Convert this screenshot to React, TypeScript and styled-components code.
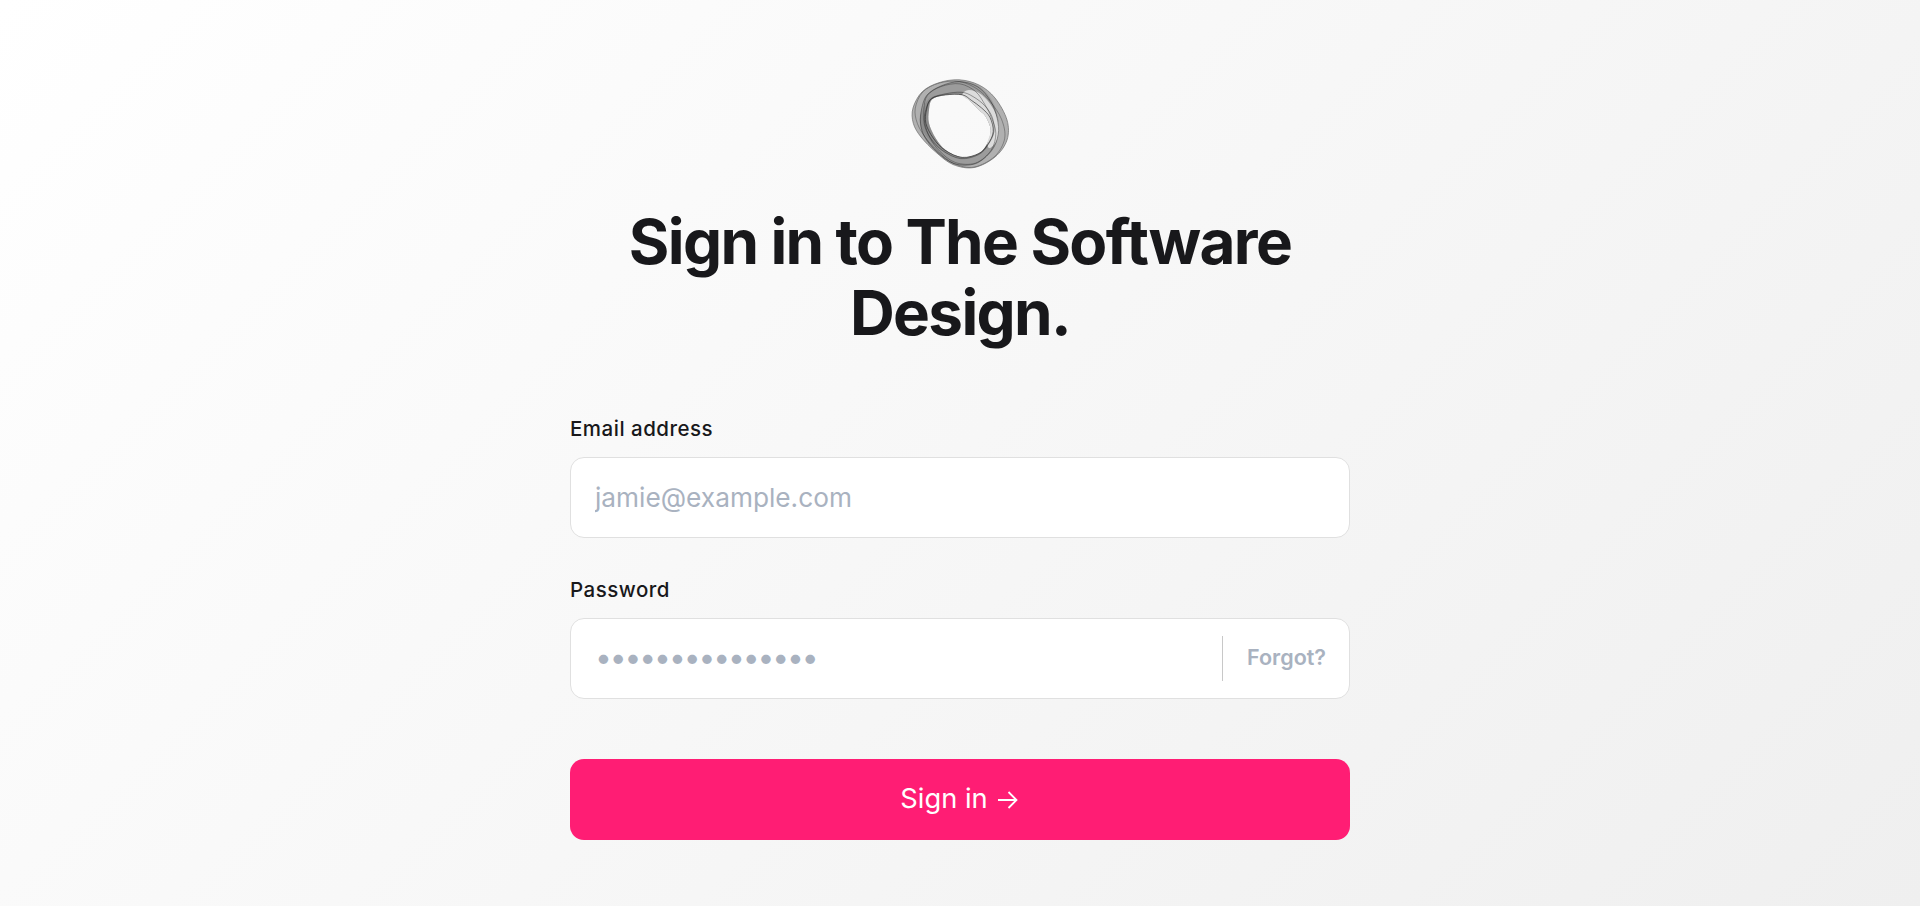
import styled, { createGlobalStyle } from 'styled-components';

const GlobalStyle = createGlobalStyle`
    * {
        box-sizing: border-box;
    }

    html, body {
        margin: 0;
        padding: 0;
    }

    body {
        font-family: Inter, "Liberation Sans", sans-serif;
        color: #18181b;
    }
`

type Point = [number, number]

const holeEdge: Point[] = [
    [23.3, 21.3], [36.7, 17], [53.3, 17], [61.7, 23.7], [70, 32], [76.7, 38.7], [81.7, 52],
    [78.3, 65.3], [70, 75.3], [53.3, 79.3], [36.7, 72], [26.7, 60.3], [20, 45.3], [20, 32],
]

const outerEdge: Point[] = [
    [13.3, 13.7], [30, 4.7], [50, 1.8], [70, 7], [86, 20], [98, 42], [98, 62],
    [86, 79], [65, 89.5], [44, 86.5], [26.7, 74], [12, 59], [4.3, 45.3], [4, 30],
]

// catmull-rom through the points, as a closed path
const smoothPath = (points: Point[]) => {
    const n = points.length
    let d = `M${points[0][0].toFixed(2)} ${points[0][1].toFixed(2)}`
    for (let i = 0; i < n; i++) {
        const p0 = points[(i + n - 1) % n]
        const p1 = points[i]
        const p2 = points[(i + 1) % n]
        const p3 = points[(i + 2) % n]
        const c1x = p1[0] + (p2[0] - p0[0]) / 6
        const c1y = p1[1] + (p2[1] - p0[1]) / 6
        const c2x = p2[0] - (p3[0] - p1[0]) / 6
        const c2y = p2[1] - (p3[1] - p1[1]) / 6
        d += `C${c1x.toFixed(2)} ${c1y.toFixed(2)} ${c2x.toFixed(2)} ${c2y.toFixed(2)} ${p2[0].toFixed(2)} ${p2[1].toFixed(2)}`
    }
    return d + 'Z'
}

// a loop part of the way from the hole to the outer edge
const strandPoints = (depth: number, swing: number, phase: number): Point[] =>
    holeEdge.map((hole, i) => {
        const t = Math.min(1, Math.max(0, depth + swing * Math.sin(i * .9 + phase)))
        return [
            hole[0] + (outerEdge[i][0] - hole[0]) * t,
            hole[1] + (outerEdge[i][1] - hole[1]) * t,
        ]
    })

const strands = [
    { depth: .1, swing: .1, phase: 3.4, opacity: .8 },
    { depth: .22, swing: .14, phase: 4.2, opacity: .55 },
    { depth: .5, swing: .24, phase: 0, opacity: .5 },
    { depth: .68, swing: .22, phase: 5.6, opacity: .6 },
    { depth: .84, swing: .14, phase: 1, opacity: .45 },
]

const shades = [
    { depth: .35, swing: .25, phase: 3.8 },
    { depth: .7, swing: .25, phase: 5.4 },
]

const paleEdge: Point[] = [
    holeEdge[2],
    [60, 12],
    [73, 17],
    [85, 32],
    [90, 48],
    [88, 62],
    [81, 70],
    holeEdge[7],
    holeEdge[6],
    holeEdge[5],
    holeEdge[4],
    holeEdge[3],
]

const Logo = () => (
    <LogoMark viewBox="0 0 102 92" aria-hidden="true">
        <path d={smoothPath(outerEdge) + smoothPath(holeEdge)} fill="#b0b0b0" fillRule="evenodd" />
        {shades.map((shade, index) =>
            <path
                key={index}
                d={smoothPath(strandPoints(shade.depth, shade.swing, shade.phase)) + smoothPath(holeEdge)}
                fill="#555"
                fillOpacity=".22"
                fillRule="evenodd"
            />
        )}
        <path d={smoothPath(paleEdge)} fill="#dcdcdc" />
        {strands.map((strand, index) =>
            <path
                key={index}
                d={smoothPath(strandPoints(strand.depth, strand.swing, strand.phase))}
                fill="none"
                stroke="#1f1f1f"
                strokeWidth=".75"
                opacity={strand.opacity}
            />
        )}
        <path d={smoothPath(outerEdge)} fill="none" stroke="#6a6a6a" strokeWidth=".7" />
    </LogoMark>
)

const App = () => {
    return (
        <Page>
            <GlobalStyle />
            <Logo />
            <Heading>Sign in to The Software Design.</Heading>
            <Form onSubmit={(e) => e.preventDefault()}>
                <Field>
                    <Label htmlFor="email">Email address</Label>
                    <InputBox>
                        <Input id="email" type="email" placeholder="jamie@example.com" />
                    </InputBox>
                </Field>
                <Field>
                    <Label htmlFor="password">Password</Label>
                    <InputBox>
                        <PasswordInput id="password" type="password" placeholder="•••••••••••••••" />
                        <Divider />
                        <ForgotLink href="#">Forgot?</ForgotLink>
                    </InputBox>
                </Field>
                <SubmitButton type="submit">
                    Sign in
                    <ArrowIcon viewBox="0 0 21 18" aria-hidden="true">
                        <path d="M1 9h18.5M11.5 1l8 8-8 8" />
                    </ArrowIcon>
                </SubmitButton>
            </Form>
        </Page>
    )
}

const Page = styled.main`
    min-height: 906px;
    height: 906px;
    overflow: hidden;
    display: flex;
    flex-direction: column;
    align-items: center;
    padding-top: 78px;
    background: linear-gradient(135deg, #ffffff 0%, #efefef 100%);
`

const LogoMark = styled.svg`
    width: 102px;
    height: 92px;
    display: block;
    filter: blur(.4px);
`

const Heading = styled.h1`
    width: 780px;
    margin: 36px 0 0;
    font-size: 62px;
    line-height: 71px;
    font-weight: 700;
    letter-spacing: -1.65px;
    text-align: center;
    color: #18181b;
`

const Form = styled.form`
    width: 780px;
    margin-top: 68px;
    display: flex;
    flex-direction: column;
    gap: 39px;
`

const Field = styled.div`
    display: flex;
    flex-direction: column;
    gap: 13px;
`

const Label = styled.label`
    font-size: 20.5px;
    line-height: 28px;
    font-weight: 500;
    letter-spacing: .5px;
    color: #18181b;
    margin-top: -1px;
    margin-bottom: 1px;
`

const InputBox = styled.div`
    height: 81px;
    display: flex;
    align-items: center;
    padding: 0 23px 0 24px;
    background: #ffffff;
    border: 1px solid #e0e0e0;
    border-radius: 14px;
`

const Input = styled.input`
    flex: 1;
    min-width: 0;
    height: 100%;
    border: 0;
    outline: 0;
    padding: 0;
    background: transparent;
    font-family: inherit;
    font-size: 26.25px;
    color: #18181b;

    &::placeholder {
        color: #a9b2c0;
        opacity: 1;
    }
`

const PasswordInput = styled(Input)`
    &::placeholder {
        font-size: 30px;
        letter-spacing: -2.1px;
    }
`

const Divider = styled.span`
    width: 1px;
    height: 45px;
    margin-left: 22px;
    background: #c8c8c8;
`

const ForgotLink = styled.a`
    margin-left: 24px;
    margin-bottom: 3px;
    font-size: 21.5px;
    font-weight: 600;
    color: #a9b2c0;
    text-decoration: none;
`

const SubmitButton = styled.button`
    height: 81px;
    margin-top: 21px;
    padding: 0 2px 2px 0;
    display: flex;
    align-items: center;
    justify-content: center;
    gap: 9px;
    border: 0;
    border-radius: 14px;
    background: #ff1d74;
    color: #ffffff;
    font-family: inherit;
    font-size: 27.3px;
    font-weight: 400;
    cursor: pointer;
`

const ArrowIcon = styled.svg`
    width: 21px;
    height: 18px;
    margin-top: 3px;
    fill: none;
    stroke: currentColor;
    stroke-width: 1.8;
`

export default App
